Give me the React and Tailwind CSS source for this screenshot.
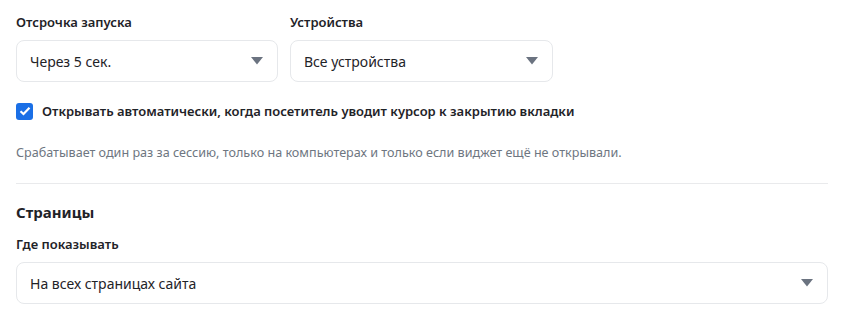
import { useState } from 'react'

const font = { fontFamily: '"Noto Sans", "Open Sans", sans-serif' }

function Caret() {
  return (
    <svg width="12" height="8" viewBox="0 0 12 8" className="shrink-0">
      <path d="M0 0 H12 L6 7.5 Z" fill="#6b7380" />
    </svg>
  )
}

function SelectBox({ value, className = '' }) {
  return (
    <div
      className={`flex h-[42px] items-center justify-between rounded-lg border border-[#e6e8eb] bg-white pl-[13px] pr-[14px] ${className}`}
    >
      <span className="text-[14px] text-[#1f2328]">{value}</span>
      <Caret />
    </div>
  )
}

function Field({ label, value, className = '' }) {
  return (
    <div className={`flex flex-col gap-[9px] ${className}`}>
      <span className="text-[13px] font-semibold leading-[18px] text-[#1f2328]">{label}</span>
      <SelectBox value={value} />
    </div>
  )
}

export default function App() {
  const [exitIntent, setExitIntent] = useState(true)

  return (
    <div className="min-h-screen bg-white px-4 pt-[13px]" style={font}>
      <div className="flex gap-3">
        <Field label="Отсрочка запуска" value="Через 5 сек." className="w-[262px]" />
        <Field label="Устройства" value="Все устройства" className="w-[263px]" />
      </div>

      <label className="mt-[19px] flex cursor-pointer items-center gap-[9px]">
        <span
          onClick={() => setExitIntent(!exitIntent)}
          className={`flex h-[17px] w-[17px] items-center justify-center rounded-[3px] ${
            exitIntent ? 'bg-[#1a6fe6]' : 'border border-gray-400 bg-white'
          }`}
        >
          {exitIntent && (
            <svg width="12" height="10" viewBox="0 0 12 10">
              <path d="M1.5 5.2 L4.5 8 L10.5 1.8" fill="none" stroke="white" strokeWidth="2.2" />
            </svg>
          )}
        </span>
        <span className="text-[13px] font-semibold leading-5 text-[#1f2328]">
          Открывать автоматически, когда посетитель уводит курсор к закрытию вкладки
        </span>
      </label>

      <p className="mt-[22px] text-[12.6px] leading-5 text-[#6e7681]">
        Срабатывает один раз за сессию, только на компьютерах и только если виджет ещё не открывали.
      </p>

      <div className="mt-5 border-t border-[#e9eaec]" />

      <h3 className="mt-[17px] text-[15px] font-bold leading-[22px] text-[#1f2328]">Страницы</h3>

      <div className="mt-[12px] flex flex-col gap-[9px]">
        <span className="text-[13px] font-semibold leading-[18px] text-[#1f2328]">Где показывать</span>
        <SelectBox value="На всех страницах сайта" />
      </div>
    </div>
  )
}
